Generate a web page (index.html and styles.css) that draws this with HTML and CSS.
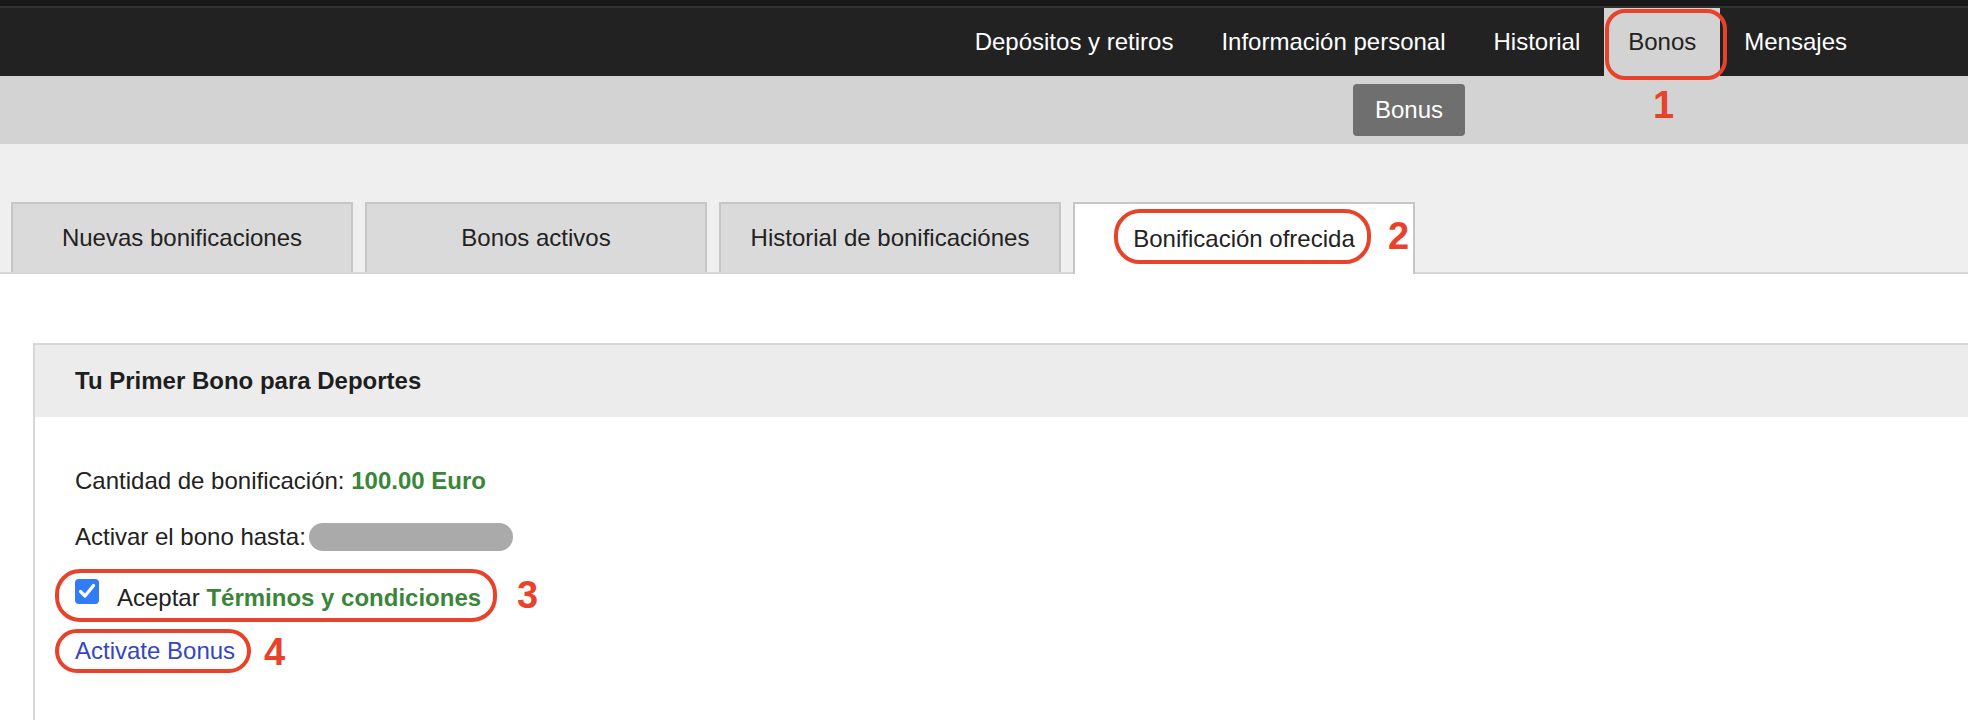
FILE: index.html
```html
<!DOCTYPE html>
<html lang="es">
<head>
<meta charset="utf-8">
<title>Bonos</title>
<link rel="stylesheet" href="styles.css">
</head>
<body>
<div class="page">
  <header class="topbar">
    <nav class="mainnav">
      <a class="navitem" href="#">Depósitos y retiros</a>
      <a class="navitem" href="#">Información personal</a>
      <a class="navitem" href="#">Historial</a>
      <a class="navitem active" href="#">Bonos</a>
      <a class="navitem" href="#">Mensajes</a>
    </nav>
  </header>
  <div class="subbar">
    <a class="subbtn" href="#">Bonus</a>
  </div>
  <div class="tabbar">
    <div class="tab">Nuevas bonificaciones</div>
    <div class="tab">Bonos activos</div>
    <div class="tab">Historial de bonificaciónes</div>
    <div class="tab current">Bonificación ofrecida</div>
  </div>
  <main class="content">
    <section class="card">
      <div class="card-head">Tu Primer Bono para Deportes</div>
      <div class="card-body">
        <div class="row r1">Cantidad de bonificación: <span class="green">100.00 Euro</span></div>
        <div class="row r2">Activar el bono hasta: <span class="pill"></span></div>
        <div class="row r3">
          <span class="checkbox"><svg viewBox="0 0 24 24" width="24" height="24"><path d="M5.5 12.5 L10 17 L18.5 6.5" fill="none" stroke="#fff" stroke-width="3.2" stroke-linecap="round" stroke-linejoin="round"/></svg></span>
          <span>Aceptar <span class="green">Términos y condiciones</span></span>
        </div>
        <div class="row r4"><a class="link" href="#">Activate Bonus</a></div>
      </div>
    </section>
  </main>

  <div class="mark m1"></div><div class="num n1">1</div>
  <div class="mark m2"></div><div class="num n2">2</div>
  <div class="mark m3"></div><div class="num n3">3</div>
  <div class="mark m4"></div><div class="num n4">4</div>
</div>
</body>
</html>
```

FILE: styles.css
```css
html, body {
  margin: 0;
  padding: 0;
  background: #fff;
  overflow: hidden;
}
body {
  font-family: "Liberation Sans", Arial, Helvetica, sans-serif;
  font-size: 24px;
  color: #222;
}
.page {
  position: relative;
  width: 1968px;
  min-height: 720px;
}
a { text-decoration: none; }

/* top navigation */
.topbar {
  background: #222;
  border-top: 6px solid #191919;
}
.mainnav {
  display: flex;
  justify-content: flex-end;
  padding-right: 97px;
  border-top: 2px solid #333;
  height: 68px;
}
.navitem {
  display: block;
  padding: 0 24px;
  line-height: 68px;
  color: #fff;
  font-size: 24px;
  white-space: nowrap;
}
.navitem.active {
  background: #d3d3d3;
  color: #222;
}

/* sub navigation */
.subbar {
  background: #d3d3d3;
  height: 68px;
  display: flex;
  align-items: center;
  padding-left: 1353px;
}
.subbtn {
  display: block;
  background: #6f6f6f;
  color: #fff;
  height: 52px;
  line-height: 52px;
  padding: 0 22px;
  border-radius: 4px;
}

/* tabs */
.tabbar {
  background: #efefef;
  display: flex;
  gap: 12px;
  padding: 58px 0 0 11px;
  border-bottom: 2px solid #d6d6d6;
  height: 70px;
}
.tab {
  box-sizing: border-box;
  width: 342px;
  height: 70px;
  background: #dadada;
  border: 2px solid #c6c6c6;
  border-bottom: 0;
  display: flex;
  align-items: center;
  justify-content: center;
  color: #222;
  white-space: nowrap;
}
.tab.current {
  background: #fff;
  height: 72px;
  margin-bottom: -2px;
}

/* card */
.content {
  padding: 69px 0 0 33px;
}
.card {
  border: 2px solid #d6d6d6;
  border-right: 0;
}
.card-head {
  background: #ececec;
  height: 72px;
  line-height: 72px;
  padding-left: 40px;
  font-weight: bold;
  color: #1e1e1e;
}
.card-body {
  padding: 46px 0 90px 40px;
}
.row {
  line-height: 36px;
  height: 36px;
  display: flex;
  align-items: center;
  white-space: pre;
}
.r1 { margin-bottom: 20px; }
.r2 { margin-bottom: 24px; }
.r3 { margin-bottom: 18px; align-items: flex-start; }
.r3 > span:last-child { line-height: 36px; padding-top: 1px; }
.green {
  color: #3a8639;
  font-weight: bold;
}
.pill {
  display: inline-block;
  width: 204px;
  height: 28px;
  border-radius: 14px;
  background: #aaa;
  margin-left: -3px;
}
.checkbox {
  display: block;
  width: 24px;
  height: 25px;
  border-radius: 4px;
  background: #2f7cf6;
  margin-right: 18px;
  margin-top: 0;
}
.checkbox svg { display: block; }
.link {
  color: #3446c2;
}

/* annotations */
.mark {
  position: absolute;
  box-sizing: border-box;
  border: 4px solid #e8432a;
}
.m1 { left: 1605px; top: 9px; width: 122px; height: 71px; border-radius: 20px; }
.m2 { left: 1114px; top: 209px; width: 257px; height: 55px; border-radius: 26px; }
.m3 { left: 55px; top: 569px; width: 442px; height: 53px; border-radius: 25px; }
.m4 { left: 55px; top: 629px; width: 196px; height: 44px; border-radius: 22px; }
.num {
  position: absolute;
  font-size: 38px;
  line-height: 38px;
  font-weight: bold;
  color: #e8432a;
}
.n1 { left: 1653px; top: 86px; }
.n2 { left: 1388px; top: 217px; }
.n3 { left: 517px; top: 576px; }
.n4 { left: 264px; top: 633px; }
```
